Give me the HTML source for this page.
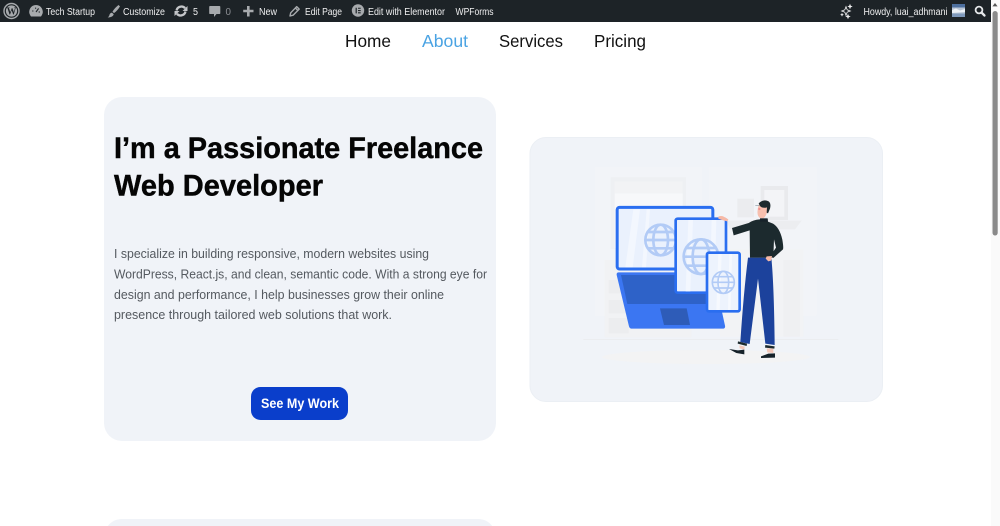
<!DOCTYPE html>
<html lang="en">
<head>
<meta charset="utf-8">
<title>Tech Startup</title>
<style>
html,body{margin:0;padding:0;width:1000px;height:526px;overflow:hidden;background:#fff}
svg{display:block}
text{font-family:"Liberation Sans",sans-serif}
.a{font-size:9.800px;fill:#f0f0f1}
.n{font-size:17.500px;fill:#111}
.b{font-size:13px;fill:#54595f}
.h{font-size:29.500px;font-weight:700;fill:#050505;stroke:#050505;stroke-width:.45px}
.ic{fill:#a7aaad}
</style>
</head>
<body>
<svg width="1000" height="526" viewBox="0 0 1000 526" xmlns="http://www.w3.org/2000/svg">
<defs><filter id="soft" x="-5%" y="-5%" width="110%" height="110%"><feGaussianBlur stdDeviation="1.1"/></filter></defs>
<rect width="1000" height="526" fill="#fff"/>

<!-- admin bar -->
<rect width="991" height="22" fill="#1d2327"/>
<circle cx="11.500" cy="11" r="7.500" fill="none" stroke="#a7aaad" stroke-width="1.400"/>
<circle cx="11.500" cy="11" r="5.600" fill="#a7aaad"/>
<text x="6.700" y="14.700" style="font-family:'Liberation Serif',serif;font-size:11px;font-weight:700;fill:#1d2327" textLength="9.600" lengthAdjust="spacingAndGlyphs">W</text>

<path class="ic" d="M36 5a6.800 6.800 0 0 1 5.800 10.300l-.8 1.200h-10l-.8-1.200A6.800 6.800 0 0 1 36 5z"/>
<path d="M36 12l2.600-3.600M32.200 11h1.200M38.600 12h1.400M35.600 7.600v1.200" stroke="#1d2327" stroke-width="1.100" fill="none"/>
<text class="a" x="46" y="15" textLength="49" lengthAdjust="spacingAndGlyphs">Tech Startup</text>

<path class="ic" d="M118.500 5l1.500 1.400c-1.600 2.700-3.600 5-6 6.700l-1.500-1.500c1.600-2.500 3.600-4.800 6-6.600zM112 12.600l1.700 1.700c-.5 2-2.500 3.100-6 3.200 1.300-.9 1.600-1.800 1.800-2.700.2-1.200 1.200-2 2.500-2.200z"/>
<text class="a" x="123" y="15" textLength="42" lengthAdjust="spacingAndGlyphs">Customize</text>

<path d="M176.500 10.500a5 5 0 0 1 8.600-2.300M185.500 11.500a5 5 0 0 1-8.600 2.300" fill="none" stroke="#c4c6c9" stroke-width="2.300"/>
<path d="M187.500 6v5h-5zM174.500 16v-5h5z" fill="#c4c6c9"/>
<text class="a" x="193" y="15" textLength="5" lengthAdjust="spacingAndGlyphs">5</text>

<path class="ic" d="M210 6h9.500a.8.8 0 0 1 .8.800v6.400a.8.8 0 0 1-.8.800h-3l-2.500 3v-3h-4a.8.8 0 0 1-.8-.8V6.800A.8.8 0 0 1 210 6z"/>
<text x="225.500" y="15" style="font-size:9.800px;fill:#8c8f94" textLength="5.500">0</text>

<path class="ic" d="M247 6h2.600v3.700h3.900v2.600h-3.900V16.500H247v-4.200h-3.800V9.700H247z"/>
<text class="a" x="259" y="15" textLength="18" lengthAdjust="spacingAndGlyphs">New</text>

<path d="M290 16l.7-3.200 6-6.200 2.500 2.500-6.100 6.100zM295.400 8l2.500 2.500" fill="none" stroke="#a7aaad" stroke-width="1.400" stroke-linejoin="round"/>
<text class="a" x="305" y="15" textLength="37" lengthAdjust="spacingAndGlyphs">Edit Page</text>

<circle cx="358" cy="10.500" r="6.200" fill="#a7aaad"/>
<path d="M355.600 7.700h1.200v5.700h-1.200zM358 7.700h2.700v1.100H358zM358 10h2.700v1.100H358zM358 12.300h2.700v1.100H358z" fill="#1d2327"/>
<text class="a" x="368" y="15" textLength="77" lengthAdjust="spacingAndGlyphs">Edit with Elementor</text>
<text class="a" x="455.500" y="15" textLength="38" lengthAdjust="spacingAndGlyphs">WPForms</text>

<path d="M846 5.500l1.500 4 4 1.500-4 1.500-1.500 4-1.500-4-4-1.500 4-1.500z" fill="#f0f0f1"/>
<path d="M846 8l.9 2.100 2.100.9-2.100.9-.9 2.100-.9-2.100-2.100-.9 2.100-.9z" fill="#1d2327"/>
<path d="M850 3.800l.8 1.900 1.900.8-1.900.8-.8 1.900-.8-1.900-1.900-.8 1.900-.8zM848 13.800l.8 1.900 1.900.8-1.900.8-.8 1.900-.8-1.900-1.900-.8 1.900-.8zM842 12.800l.6 1.300 1.300.6-1.300.6-.6 1.300-.6-1.300-1.300-.6 1.300-.6z" fill="#f0f0f1"/>
<text class="a" x="863.500" y="15" textLength="84" lengthAdjust="spacingAndGlyphs">Howdy, luai_adhmani</text>

<rect x="952" y="4" width="13" height="13" fill="#b9c6d6"/>
<rect x="952" y="4" width="13" height="3.500" fill="#4d6f9e"/>
<path d="M952 10l4-1.500 4 2 5-1.500v3l-13 1z" fill="#eef2f6"/>
<rect x="952" y="13.500" width="13" height="3.500" fill="#7f99bb"/>

<circle cx="979" cy="10" r="3.400" fill="none" stroke="#e6e8ea" stroke-width="1.800"/>
<path d="M981.500 12.500l3 3" stroke="#e6e8ea" stroke-width="2.300" stroke-linecap="round"/>

<!-- scrollbar -->
<rect x="991" y="0" width="9" height="526" fill="#fafafa"/>
<path d="M995 3l2.600 3.400h-5.200z" fill="#555"/>
<rect x="992.500" y="11" width="5.200" height="224.500" rx="2.600" fill="#8a8a8a"/>

<!-- nav -->
<text class="n" x="345" y="47" textLength="46" lengthAdjust="spacingAndGlyphs">Home</text>
<text class="n" x="422" y="47" textLength="46" lengthAdjust="spacingAndGlyphs" style="fill:#4aa3e3">About</text>
<text class="n" x="499" y="47" textLength="64" lengthAdjust="spacingAndGlyphs">Services</text>
<text class="n" x="594" y="47" textLength="52" lengthAdjust="spacingAndGlyphs">Pricing</text>

<!-- card 1 -->
<rect x="104" y="97" width="392" height="344" rx="18" fill="#f0f3f8"/>
<text class="h" x="114" y="158" textLength="369" lengthAdjust="spacingAndGlyphs">I’m a Passionate Freelance</text>
<text class="h" x="114" y="195.500" textLength="209" lengthAdjust="spacingAndGlyphs">Web Developer</text>
<text class="b" x="114" y="258" textLength="315" lengthAdjust="spacingAndGlyphs">I specialize in building responsive, modern websites using</text>
<text class="b" x="114" y="278.500" textLength="373" lengthAdjust="spacingAndGlyphs">WordPress, React.js, and clean, semantic code. With a strong eye for</text>
<text class="b" x="114" y="299" textLength="330" lengthAdjust="spacingAndGlyphs">design and performance, I help businesses grow their online</text>
<text class="b" x="114" y="319" textLength="278" lengthAdjust="spacingAndGlyphs">presence through tailored web solutions that work.</text>
<rect x="251" y="387" width="97" height="33" rx="9.500" fill="#0a3ecb"/>
<text x="261" y="408" textLength="78" lengthAdjust="spacingAndGlyphs" style="font-size:14px;font-weight:700;fill:#fff">See My Work</text>

<!-- card 3 peek -->
<path d="M107.800 526A18 18 0 0 1 122 519H478A18 18 0 0 1 492.200 526Z" fill="#f0f3f8"/>

<!-- card 2 -->
<rect x="530" y="137.500" width="352.500" height="264" rx="16" fill="#f0f3f8" stroke="#ebeff4"/>

<!-- illustration -->
<g transform="translate(570 160) scale(.33333)" filter="url(#soft)">
  <!-- faint background -->
  <rect x="74" y="20" width="322" height="448" rx="6" fill="#f2f4f8"/>
  <rect x="416" y="20" width="324" height="448" rx="6" fill="#f2f4f8"/>
  <rect x="122" y="52" width="226" height="215" fill="#eef0f3"/>
  <rect x="134" y="64" width="204" height="36" fill="#f2f3f5"/>
  <rect x="134" y="100" width="204" height="165" fill="#f7f8fa"/>
  <rect x="572" y="78" width="82" height="102" fill="#e9eaed"/>
  <rect x="583" y="90" width="60" height="80" fill="#f3f4f7"/>
  <rect x="502" y="116" width="50" height="56" fill="#ebecef"/>
  <path d="M470 182h225l-20 26H480z" fill="#ecedf0"/>
  <rect x="104" y="300" width="260" height="232" fill="#f1f2f4"/>
  <rect x="116" y="360" width="40" height="40" fill="#ecedef"/>
  <rect x="116" y="420" width="60" height="40" fill="#ecedef"/>
  <rect x="116" y="474" width="60" height="46" fill="#ecedef"/>
  <rect x="450" y="268" width="250" height="262" fill="#f2f3f5"/>
  <rect x="640" y="300" width="50" height="230" fill="#eff0f2"/>
  <rect x="40" y="537" width="765" height="3" fill="#ebedf0"/>
  <ellipse cx="408" cy="591" rx="312" ry="21" fill="#f3f3f4"/>

  <!-- laptop -->
  <path d="M146 337h284l35 160q2 9-8 9H186q-7 0-9-7L140 345q-1-8 6-8z" fill="#3a76f2"/>
  <path d="M153 345h262l8 87H172z" fill="#2f62c8"/>
  <path d="M270 445h80l10 50h-78z" fill="#2d5bb8"/>
  <rect x="141.500" y="142" width="287" height="185" rx="7" fill="#eaf1fd" stroke="#2a6ef0" stroke-width="9"/>
  <path d="M190 148l-24 174h22l22-174zM230 148l-14 174h12l12-174z" fill="#f3f7fe"/>
  <g fill="none" stroke="#b2cbf6" stroke-width="8">
    <circle cx="272" cy="240" r="46"/><ellipse cx="272" cy="240" rx="22" ry="46"/>
    <path d="M232 216h80M226 240h92M232 265h80"/>
  </g>

  <!-- tablet -->
  <rect x="317" y="176" width="151" height="222" rx="6" fill="#eaf1fd" stroke="#2a6ef0" stroke-width="8"/>
  <path d="M355 180l-8 214h14l8-214zM425 180l-6 214h14l6-214z" fill="#f3f7fe"/>
  <g fill="none" stroke="#b2cbf6" stroke-width="8">
    <circle cx="393" cy="290" r="52"/><ellipse cx="393" cy="290" rx="25" ry="52"/>
    <path d="M348 264h90M341 290h104M348 317h90"/>
  </g>

  <!-- phone -->
  <rect x="411" y="278" width="98" height="176" rx="6" fill="#edf3fd" stroke="#2a6ef0" stroke-width="8"/>
  <path d="M445 282l-6 168h10l6-168zM478 282l-4 168h8l4-168z" fill="#f6f9fe"/>
  <g fill="none" stroke="#b2cbf6" stroke-width="5">
    <circle cx="460" cy="367" r="33"/><ellipse cx="460" cy="367" rx="16" ry="33"/>
    <path d="M432 350h56M427 367h66M432 384h56"/>
  </g>

  <!-- person -->
  <path d="M445 170q8-4 16 0l14 8-3 6-16-4-11-4z" fill="#f6b9a6"/>
  <path d="M534 293h70q8 80 10 262l-28-4-22-195-25 196-28-6q10-150 23-253z" fill="#1c429c"/>
  <path d="M504 544l27 7-1 7-27-7zM586 555l28 4-1 7-28-3z" fill="#1f2a2e"/>
  <path d="M508 556l16 4-1 9-14-4zM590 565l20 1 0 13-18-2z" fill="#f3c8ba"/>
  <path d="M477 567l27 4 19-2 0 14-24-4zM573 589l22-8 20-1 0 13-42 1z" fill="#15202a"/>
  <path d="M569 178l24-1 1 8 15 6q20 12 28 48 4 24 2 29l-29 26-7-9 15-22-6-25-2 55h-70l-1-82-48 15-5-22 50-15q14-10 33-11z" fill="#1f2a2e"/>
  <path d="M590 289l16-1-3 14-8 2-8-8z" fill="#f6b9a6"/>
  <path d="M566 135q10-12 24-6 6 10 2 24-2 14-12 22-14 2-17-12-2-12 3-28z" fill="#f7bfae"/>
  <path d="M566 130q14-14 30-6 8 6 4 22l-6 14-4-2 1-16q-14 4-21-4z" fill="#1f2a2e"/>
  <circle cx="568" cy="147" r="3.500" fill="#f08f8f"/>
  <path d="M556 136h12" stroke="#8d9aa3" stroke-width="2"/>
  <path d="M570 175h23v10h-23z" fill="#18242a"/>
</g>
</svg>
</body>
</html>
